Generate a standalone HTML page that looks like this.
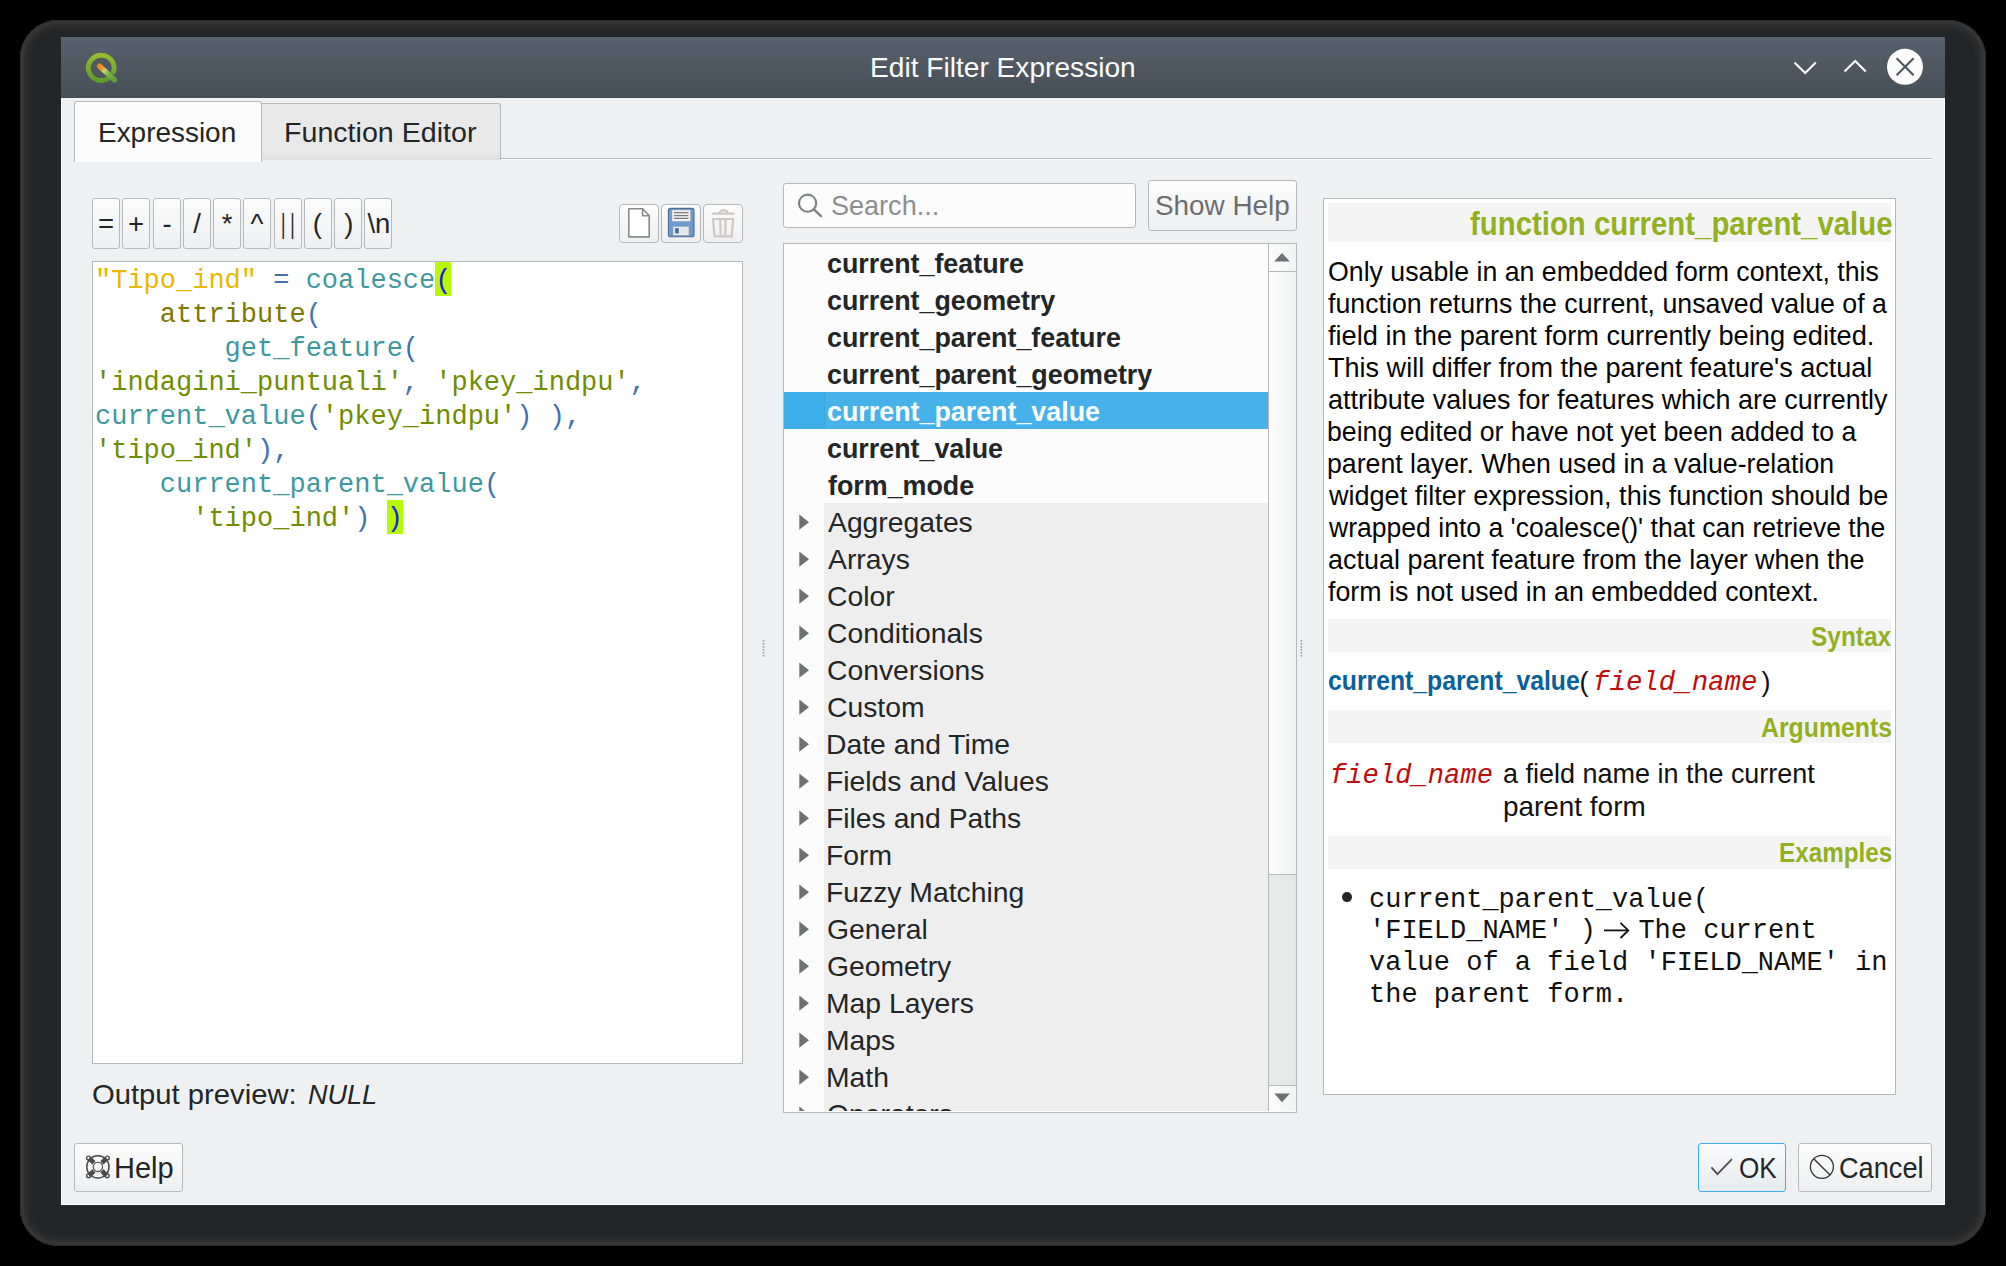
<!DOCTYPE html><html><head><meta charset="utf-8"><style>html,body{margin:0;padding:0}body{width:2006px;height:1266px;background:#000;position:relative;overflow:hidden}body>div,body>svg{position:absolute;box-sizing:content-box}.t{white-space:pre;line-height:0;height:0}</style></head><body>
<div style="left:20px;top:20px;width:1966px;height:1226px;border-radius:38px;background:#232629;box-shadow:inset 0 0 0 1px #2a2a2b, inset 0 0 0 2px #3a3939, inset 0 0 0 4px #353535, inset 0 0 0 6px #2f2f30, inset 0 0 0 8px #2a2b2c, inset 0 0 0 11px #26282a"></div>
<div style="left:61px;top:98px;width:1884px;height:1107px;background:#eff0f1;box-shadow:inset 1px 0 0 #fff, inset -1px 0 0 #fff, inset 0 -1px 0 #fff"></div>
<div style="left:61px;top:37px;width:1884px;height:61px;background:linear-gradient(#58626c,#464e56)"></div>
<svg style="left:80px;top:46px" width="44" height="42" viewBox="80 46 44 42">
<defs><linearGradient id="qg" x1="0" y1="0" x2="0" y2="1"><stop offset="0" stop-color="#94bb2c"/><stop offset="1" stop-color="#5d9c2d"/></linearGradient>
<linearGradient id="pg" gradientUnits="userSpaceOnUse" x1="98.5" y1="65" x2="115.5" y2="80.8"><stop offset="0" stop-color="#f07f1c"/><stop offset="0.22" stop-color="#f29a3a"/><stop offset="0.36" stop-color="#c9d66e"/><stop offset="0.55" stop-color="#7fb446"/><stop offset="1" stop-color="#5c9d36"/></linearGradient></defs>
<path d="M108.6 78.2 A12.9 12.6 0 1 1 112.7 73.6" fill="none" stroke="url(#qg)" stroke-width="4.9"/>
<line x1="99.6" y1="66.2" x2="114.6" y2="80" stroke="url(#pg)" stroke-width="5.4" stroke-linecap="round"/>
</svg>
<div class="t" style="left:869.55px;top:68.19px;font-family:'Liberation Sans', sans-serif;font-size:28px;font-weight:400;font-style:normal;color:#fcfcfc;transform:scaleX(1.0046);transform-origin:0 0;">Edit Filter Expression</div>
<svg style="left:1780px;top:40px" width="150" height="55" viewBox="1780 40 150 55">
<polyline points="1794.5,62.5 1805.2,73 1815.8,62.5" fill="none" stroke="#fcfcfc" stroke-width="2.1"/>
<polyline points="1844.5,71.5 1855.2,61 1865.8,71.5" fill="none" stroke="#fcfcfc" stroke-width="2.1"/>
<circle cx="1905" cy="66.8" r="18" fill="#fcfcfc"/>
<line x1="1896.6" y1="58.3" x2="1913.6" y2="75.3" stroke="#4b535b" stroke-width="2.1"/>
<line x1="1913.6" y1="58.3" x2="1896.6" y2="75.3" stroke="#4b535b" stroke-width="2.1"/>
</svg>
<div style="left:501px;top:158px;width:1431px;height:1px;background:#b6b8b9"></div>
<div style="left:501px;top:159px;width:1431px;height:1px;background:#fbfbfb"></div>
<div style="left:261px;top:103px;width:239px;height:56px;background:linear-gradient(#e9e9ea 0%,#e8e8e8 85%,#dfe0e0 100%);border:1px solid #b6b8b9;border-bottom:none;border-left:none;border-radius:0 3px 0 0"></div>
<div style="left:74px;top:101px;width:186px;height:60px;background:#fcfcfc;border:1px solid #b6b8b9;border-bottom:none;border-radius:3px 3px 0 0"></div>
<div class="t" style="left:98.36px;top:132.87px;font-family:'Liberation Sans', sans-serif;font-size:27.5px;font-weight:400;font-style:normal;color:#232627;transform:scaleX(1.0159);transform-origin:0 0;">Expression</div>
<div class="t" style="left:284.21px;top:132.87px;font-family:'Liberation Sans', sans-serif;font-size:27.5px;font-weight:400;font-style:normal;color:#232627;transform:scaleX(1.0404);transform-origin:0 0;">Function Editor</div>
<div style="left:92px;top:198px;width:26px;height:49px;background:linear-gradient(#fcfcfc,#eeeff0);border:1px solid #b6b8b9;border-radius:3px"></div>
<div class="t" style="left:97.96px;top:224.47px;font-family:'Liberation Sans', sans-serif;font-size:27.5px;font-weight:400;font-style:normal;color:#232627;">=</div>
<div style="left:122px;top:198px;width:26px;height:49px;background:linear-gradient(#fcfcfc,#eeeff0);border:1px solid #b6b8b9;border-radius:3px"></div>
<div class="t" style="left:127.96px;top:224.47px;font-family:'Liberation Sans', sans-serif;font-size:27.5px;font-weight:400;font-style:normal;color:#232627;">+</div>
<div style="left:153px;top:198px;width:26px;height:49px;background:linear-gradient(#fcfcfc,#eeeff0);border:1px solid #b6b8b9;border-radius:3px"></div>
<div class="t" style="left:162.39px;top:224.47px;font-family:'Liberation Sans', sans-serif;font-size:27.5px;font-weight:400;font-style:normal;color:#232627;">-</div>
<div style="left:183px;top:198px;width:26px;height:49px;background:linear-gradient(#fcfcfc,#eeeff0);border:1px solid #b6b8b9;border-radius:3px"></div>
<div class="t" style="left:193.15px;top:224.47px;font-family:'Liberation Sans', sans-serif;font-size:27.5px;font-weight:400;font-style:normal;color:#232627;">/</div>
<div style="left:213px;top:198px;width:26px;height:49px;background:linear-gradient(#fcfcfc,#eeeff0);border:1px solid #b6b8b9;border-radius:3px"></div>
<div class="t" style="left:221.64px;top:224.47px;font-family:'Liberation Sans', sans-serif;font-size:27.5px;font-weight:400;font-style:normal;color:#232627;">*</div>
<div style="left:243px;top:198px;width:26px;height:49px;background:linear-gradient(#fcfcfc,#eeeff0);border:1px solid #b6b8b9;border-radius:3px"></div>
<div class="t" style="left:250.54px;top:224.47px;font-family:'Liberation Sans', sans-serif;font-size:27.5px;font-weight:400;font-style:normal;color:#232627;">^</div>
<div style="left:274px;top:198px;width:26px;height:49px;background:linear-gradient(#fcfcfc,#eeeff0);border:1px solid #b6b8b9;border-radius:3px"></div>
<div class="t" style="left:281.18px;top:224.47px;font-family:'Liberation Sans', sans-serif;font-size:27.5px;font-weight:400;font-style:normal;color:#232627;transform:scaleX(0.6200);transform-origin:0 0;">| |</div>
<div style="left:304px;top:198px;width:26px;height:49px;background:linear-gradient(#fcfcfc,#eeeff0);border:1px solid #b6b8b9;border-radius:3px"></div>
<div class="t" style="left:312.71px;top:224.47px;font-family:'Liberation Sans', sans-serif;font-size:27.5px;font-weight:400;font-style:normal;color:#232627;">(</div>
<div style="left:334px;top:198px;width:26px;height:49px;background:linear-gradient(#fcfcfc,#eeeff0);border:1px solid #b6b8b9;border-radius:3px"></div>
<div class="t" style="left:344.22px;top:224.47px;font-family:'Liberation Sans', sans-serif;font-size:27.5px;font-weight:400;font-style:normal;color:#232627;">)</div>
<div style="left:364px;top:198px;width:26px;height:49px;background:linear-gradient(#fcfcfc,#eeeff0);border:1px solid #b6b8b9;border-radius:3px"></div>
<div class="t" style="left:367.41px;top:224.47px;font-family:'Liberation Sans', sans-serif;font-size:27.5px;font-weight:400;font-style:normal;color:#232627;">\n</div>
<div style="left:619px;top:204px;width:38px;height:37px;background:linear-gradient(#fcfcfc,#eeeff0);border:1px solid #b6b8b9;border-radius:4px"></div>
<div style="left:661px;top:204px;width:38px;height:37px;background:linear-gradient(#fcfcfc,#eeeff0);border:1px solid #b6b8b9;border-radius:4px"></div>
<div style="left:703px;top:204px;width:38px;height:37px;background:linear-gradient(#fcfcfc,#eeeff0);border:1px solid #b6b8b9;border-radius:4px"></div>
<svg style="left:620px;top:204px" width="125" height="40" viewBox="620 204 125 40">
<path d="M628.8 208.8 H642.6 L649.2 215.8 V236.9 H628.8 Z" fill="#ffffff" stroke="#8a8a8a" stroke-width="1.6" stroke-linejoin="round"/>
<path d="M642.6 208.8 V215.8 H649.2" fill="none" stroke="#8a8a8a" stroke-width="1.6" stroke-linejoin="round"/>
<rect x="668.4" y="208.4" width="25.6" height="28.3" rx="2.3" fill="#6b9bd0" stroke="#4a6d97" stroke-width="1.1"/>
<rect x="672" y="210" width="18.4" height="11.3" fill="#f0f0f0" stroke="#a8a8a8" stroke-width="0.5"/>
<line x1="674" y1="212.7" x2="688.4" y2="212.7" stroke="#7a7a7a" stroke-width="1.2"/>
<line x1="674" y1="215.6" x2="688.4" y2="215.6" stroke="#7a7a7a" stroke-width="1.2"/>
<line x1="674" y1="218.4" x2="688.4" y2="218.4" stroke="#7a7a7a" stroke-width="1.2"/>
<rect x="673" y="226.5" width="16" height="8.8" fill="#e9e9e9" stroke="#a0a0a0" stroke-width="0.6"/>
<rect x="675.2" y="228.2" width="3.5" height="5.2" fill="#3d6591"/>
<g fill="none" stroke="#d3c6c6" stroke-width="2.2" stroke-linecap="round">
<line x1="712.6" y1="213.6" x2="733.6" y2="213.6"/>
<path d="M719.6 212 Q723.5 208.3 727.6 212"/>
<path d="M713 219 L733.2 219 L731.6 236.4 L714.6 236.4 Z" stroke-linejoin="round"/>
<line x1="720.3" y1="219.5" x2="720.6" y2="235.5"/>
<line x1="725.6" y1="219.5" x2="725.3" y2="235.5"/>
</g>
</svg>
<div style="left:92px;top:261px;width:649px;height:801px;background:#ffffff;border:1px solid #b6b8b9"></div>
<div style="left:435.20px;top:262px;width:16.20px;height:34px;background:#b7f907"></div>
<div style="left:386.60px;top:500px;width:16.20px;height:34px;background:#b7f907"></div>
<div class="t" style="left:95px;top:280.52px;font-family:'Liberation Mono', monospace;font-size:27px"><span style="color:#eab700">&quot;Tipo_ind&quot;</span><span style="color:#4271ae"> </span><span style="color:#4271ae">=</span><span style="color:#4271ae"> </span><span style="color:#3e999f">coalesce</span><span style="color:#1c1ce8">(</span></div>
<div class="t" style="left:95px;top:314.52px;font-family:'Liberation Mono', monospace;font-size:27px"><span style="color:#7f7800">    attribute</span><span style="color:#4271ae">(</span></div>
<div class="t" style="left:95px;top:348.52px;font-family:'Liberation Mono', monospace;font-size:27px"><span style="color:#3e999f">        get_feature</span><span style="color:#4271ae">(</span></div>
<div class="t" style="left:95px;top:382.52px;font-family:'Liberation Mono', monospace;font-size:27px"><span style="color:#718c00">&#x27;indagini_puntuali&#x27;</span><span style="color:#4271ae">,</span><span style="color:#4271ae"> </span><span style="color:#718c00">&#x27;pkey_indpu&#x27;</span><span style="color:#4271ae">,</span></div>
<div class="t" style="left:95px;top:416.52px;font-family:'Liberation Mono', monospace;font-size:27px"><span style="color:#3e999f">current_value</span><span style="color:#4271ae">(</span><span style="color:#718c00">&#x27;pkey_indpu&#x27;</span><span style="color:#4271ae">)</span><span style="color:#4271ae"> </span><span style="color:#4271ae">)</span><span style="color:#4271ae">,</span></div>
<div class="t" style="left:95px;top:450.52px;font-family:'Liberation Mono', monospace;font-size:27px"><span style="color:#718c00">&#x27;tipo_ind&#x27;</span><span style="color:#4271ae">)</span><span style="color:#4271ae">,</span></div>
<div class="t" style="left:95px;top:484.52px;font-family:'Liberation Mono', monospace;font-size:27px"><span style="color:#3e999f">    current_parent_value</span><span style="color:#4271ae">(</span></div>
<div class="t" style="left:95px;top:518.52px;font-family:'Liberation Mono', monospace;font-size:27px"><span style="color:#718c00">      &#x27;tipo_ind&#x27;</span><span style="color:#4271ae">)</span><span style="color:#4271ae"> </span><span style="color:#1c1ce8">)</span></div>
<div class="t" style="left:91.69px;top:1095.29px;font-family:'Liberation Sans', sans-serif;font-size:28px;font-weight:400;font-style:normal;color:#232627;transform:scaleX(1.0436);transform-origin:0 0;">Output preview:</div>
<div class="t" style="left:307.59px;top:1095.47px;font-family:'Liberation Sans', sans-serif;font-size:27.5px;font-weight:400;font-style:italic;color:#232627;transform:scaleX(0.9835);transform-origin:0 0;">NULL</div>
<div style="left:783px;top:183px;width:351px;height:43px;background:#fcfcfc;border:1px solid #b6b8b9;border-radius:3px"></div>
<svg style="left:790px;top:186px" width="40" height="36" viewBox="790 186 40 36">
<circle cx="807.6" cy="203.2" r="8.6" fill="none" stroke="#7f8283" stroke-width="2.1"/>
<line x1="813.8" y1="209.4" x2="821" y2="216.2" stroke="#7f8283" stroke-width="2.4" stroke-linecap="round"/>
</svg>
<div class="t" style="left:831.18px;top:206.27px;font-family:'Liberation Sans', sans-serif;font-size:27.5px;font-weight:400;font-style:normal;color:#8c8e90;transform:scaleX(0.9832);transform-origin:0 0;">Search...</div>
<div style="left:1148px;top:180px;width:147px;height:49px;background:linear-gradient(#fcfcfc,#eeeff0);border:1px solid #b6b8b9;border-radius:3px"></div>
<div class="t" style="left:1154.75px;top:206.09px;font-family:'Liberation Sans', sans-serif;font-size:28px;font-weight:400;font-style:normal;color:#6b6e70;transform:scaleX(0.9947);transform-origin:0 0;">Show Help</div>
<div style="left:783px;top:243px;width:512px;height:868px;background:#fcfcfc;border:1px solid #b6b8b9"></div>
<div style="left:824px;top:503px;width:444px;height:608px;background:#eeeeee"></div>
<div style="left:784px;top:392px;width:484px;height:37px;background:#3daee9"></div>
<div style="left:824px;top:392px;width:444px;height:37px;background:#47b2ea;box-shadow:inset 1px 0 0 #3aa6de"></div>
<div class="t" style="left:826.93px;top:263.87px;font-family:'Liberation Sans', sans-serif;font-size:27.5px;font-weight:700;font-style:normal;color:#232627;transform:scaleX(0.9761);transform-origin:0 0;">current_feature</div>
<div class="t" style="left:826.93px;top:300.87px;font-family:'Liberation Sans', sans-serif;font-size:27.5px;font-weight:700;font-style:normal;color:#232627;transform:scaleX(0.9761);transform-origin:0 0;">current_geometry</div>
<div class="t" style="left:826.93px;top:337.87px;font-family:'Liberation Sans', sans-serif;font-size:27.5px;font-weight:700;font-style:normal;color:#232627;transform:scaleX(0.9761);transform-origin:0 0;">current_parent_feature</div>
<div class="t" style="left:826.93px;top:374.87px;font-family:'Liberation Sans', sans-serif;font-size:27.5px;font-weight:700;font-style:normal;color:#232627;transform:scaleX(0.9761);transform-origin:0 0;">current_parent_geometry</div>
<div class="t" style="left:826.93px;top:411.87px;font-family:'Liberation Sans', sans-serif;font-size:27.5px;font-weight:700;font-style:normal;color:#fcfcfc;transform:scaleX(0.9761);transform-origin:0 0;">current_parent_value</div>
<div class="t" style="left:826.93px;top:448.87px;font-family:'Liberation Sans', sans-serif;font-size:27.5px;font-weight:700;font-style:normal;color:#232627;transform:scaleX(0.9761);transform-origin:0 0;">current_value</div>
<div class="t" style="left:827.60px;top:485.87px;font-family:'Liberation Sans', sans-serif;font-size:27.5px;font-weight:700;font-style:normal;color:#232627;transform:scaleX(0.9761);transform-origin:0 0;">form_mode</div>
<div class="t" style="left:828.00px;top:522.87px;font-family:'Liberation Sans', sans-serif;font-size:27.5px;font-weight:400;font-style:normal;color:#232627;transform:scaleX(1.0293);transform-origin:0 0;">Aggregates</div>
<div class="t" style="left:828.00px;top:559.87px;font-family:'Liberation Sans', sans-serif;font-size:27.5px;font-weight:400;font-style:normal;color:#232627;transform:scaleX(1.0293);transform-origin:0 0;">Arrays</div>
<div class="t" style="left:826.58px;top:596.87px;font-family:'Liberation Sans', sans-serif;font-size:27.5px;font-weight:400;font-style:normal;color:#232627;transform:scaleX(1.0293);transform-origin:0 0;">Color</div>
<div class="t" style="left:826.58px;top:633.87px;font-family:'Liberation Sans', sans-serif;font-size:27.5px;font-weight:400;font-style:normal;color:#232627;transform:scaleX(1.0293);transform-origin:0 0;">Conditionals</div>
<div class="t" style="left:826.58px;top:670.87px;font-family:'Liberation Sans', sans-serif;font-size:27.5px;font-weight:400;font-style:normal;color:#232627;transform:scaleX(1.0293);transform-origin:0 0;">Conversions</div>
<div class="t" style="left:826.58px;top:707.87px;font-family:'Liberation Sans', sans-serif;font-size:27.5px;font-weight:400;font-style:normal;color:#232627;transform:scaleX(1.0293);transform-origin:0 0;">Custom</div>
<div class="t" style="left:825.74px;top:744.87px;font-family:'Liberation Sans', sans-serif;font-size:27.5px;font-weight:400;font-style:normal;color:#232627;transform:scaleX(1.0293);transform-origin:0 0;">Date and Time</div>
<div class="t" style="left:825.74px;top:781.87px;font-family:'Liberation Sans', sans-serif;font-size:27.5px;font-weight:400;font-style:normal;color:#232627;transform:scaleX(1.0293);transform-origin:0 0;">Fields and Values</div>
<div class="t" style="left:825.74px;top:818.87px;font-family:'Liberation Sans', sans-serif;font-size:27.5px;font-weight:400;font-style:normal;color:#232627;transform:scaleX(1.0293);transform-origin:0 0;">Files and Paths</div>
<div class="t" style="left:825.74px;top:855.87px;font-family:'Liberation Sans', sans-serif;font-size:27.5px;font-weight:400;font-style:normal;color:#232627;transform:scaleX(1.0293);transform-origin:0 0;">Form</div>
<div class="t" style="left:825.74px;top:892.87px;font-family:'Liberation Sans', sans-serif;font-size:27.5px;font-weight:400;font-style:normal;color:#232627;transform:scaleX(1.0293);transform-origin:0 0;">Fuzzy Matching</div>
<div class="t" style="left:826.58px;top:929.87px;font-family:'Liberation Sans', sans-serif;font-size:27.5px;font-weight:400;font-style:normal;color:#232627;transform:scaleX(1.0293);transform-origin:0 0;">General</div>
<div class="t" style="left:826.58px;top:966.87px;font-family:'Liberation Sans', sans-serif;font-size:27.5px;font-weight:400;font-style:normal;color:#232627;transform:scaleX(1.0293);transform-origin:0 0;">Geometry</div>
<div class="t" style="left:825.74px;top:1003.87px;font-family:'Liberation Sans', sans-serif;font-size:27.5px;font-weight:400;font-style:normal;color:#232627;transform:scaleX(1.0293);transform-origin:0 0;">Map Layers</div>
<div class="t" style="left:825.74px;top:1040.87px;font-family:'Liberation Sans', sans-serif;font-size:27.5px;font-weight:400;font-style:normal;color:#232627;transform:scaleX(1.0293);transform-origin:0 0;">Maps</div>
<div class="t" style="left:825.74px;top:1077.87px;font-family:'Liberation Sans', sans-serif;font-size:27.5px;font-weight:400;font-style:normal;color:#232627;transform:scaleX(1.0293);transform-origin:0 0;">Math</div>
<svg style="left:784px;top:244px" width="40" height="867" viewBox="784 244 40 867"><g fill="#6f7070"><path d="M799.3 514.6 L809 522.2 L799.3 529.8 Z"/><path d="M799.3 551.6 L809 559.2 L799.3 566.8 Z"/><path d="M799.3 588.6 L809 596.2 L799.3 603.8 Z"/><path d="M799.3 625.6 L809 633.2 L799.3 640.8 Z"/><path d="M799.3 662.6 L809 670.2 L799.3 677.8 Z"/><path d="M799.3 699.6 L809 707.2 L799.3 714.8 Z"/><path d="M799.3 736.6 L809 744.2 L799.3 751.8 Z"/><path d="M799.3 773.6 L809 781.2 L799.3 788.8 Z"/><path d="M799.3 810.6 L809 818.2 L799.3 825.8 Z"/><path d="M799.3 847.6 L809 855.2 L799.3 862.8 Z"/><path d="M799.3 884.6 L809 892.2 L799.3 899.8 Z"/><path d="M799.3 921.6 L809 929.2 L799.3 936.8 Z"/><path d="M799.3 958.6 L809 966.2 L799.3 973.8 Z"/><path d="M799.3 995.6 L809 1003.2 L799.3 1010.8 Z"/><path d="M799.3 1032.6 L809 1040.2 L799.3 1047.8 Z"/><path d="M799.3 1069.6 L809 1077.2 L799.3 1084.8 Z"/><path d="M799.3 1106.6 L809 1114.2 L799.3 1121.8 Z"/></g></svg>
<div style="left:824px;top:1095px;width:444px;height:16px;overflow:hidden"><div class="t" style="position:absolute;left:2.62px;top:19.87px;font-family:'Liberation Sans', sans-serif;font-size:27.5px;color:#232627;transform:scaleX(1.0293);transform-origin:0 0">Operators</div></div>
<div style="left:1268px;top:244px;width:27px;height:867px;background:linear-gradient(to right,#fcfcfc,#f1f2f2);border-left:1px solid #b6b8b9"></div>
<div style="left:1269px;top:271px;width:27px;height:1px;background:#b6b8b9"></div>
<div style="left:1269px;top:874px;width:27px;height:210px;background:linear-gradient(to right,#e7e8e8 85%,#e1e2e2);border-top:1px solid #b6b8b9;border-bottom:1px solid #b6b8b9"></div>
<svg style="left:1268px;top:244px" width="28" height="867" viewBox="1268 244 28 867">
<path d="M1274.3 261.6 L1282 253 L1289.8 261.6 Z" fill="#6e7072"/>
<path d="M1274.3 1093.5 L1289.8 1093.5 L1282 1102.3 Z" fill="#6e7072"/>
</svg>
<svg style="left:750px;top:630px" width="600" height="40" viewBox="750 630 600 40"><g fill="#9a9b9c"><rect x="762.7" y="640" width="1.6" height="1.6"/><rect x="762.7" y="643" width="1.6" height="1.6"/><rect x="762.7" y="646" width="1.6" height="1.6"/><rect x="762.7" y="649" width="1.6" height="1.6"/><rect x="762.7" y="652" width="1.6" height="1.6"/><rect x="762.7" y="655" width="1.6" height="1.6"/><rect x="1300.6" y="640" width="1.6" height="1.6"/><rect x="1300.6" y="643" width="1.6" height="1.6"/><rect x="1300.6" y="646" width="1.6" height="1.6"/><rect x="1300.6" y="649" width="1.6" height="1.6"/><rect x="1300.6" y="652" width="1.6" height="1.6"/><rect x="1300.6" y="655" width="1.6" height="1.6"/></g></svg>
<div style="left:1323px;top:198px;width:571px;height:895px;background:#ffffff;border:1px solid #b6b8b9"></div>
<div style="left:1328px;top:203px;width:563px;height:39px;background:#f4f4f5"></div>
<div style="left:1328px;top:619px;width:563px;height:33px;background:#f4f4f5"></div>
<div style="left:1328px;top:710px;width:563px;height:33px;background:#f4f4f5"></div>
<div style="left:1328px;top:836px;width:563px;height:33px;background:#f4f4f5"></div>
<div class="t" style="left:1469.56px;top:223.86px;font-family:'Liberation Sans', sans-serif;font-size:33px;font-weight:700;font-style:normal;color:#93b023;transform:scaleX(0.8896);transform-origin:0 0;">function current_parent_value</div>
<div class="t" style="left:1327.50px;top:272.14px;font-family:'Liberation Sans', sans-serif;font-size:27.3px;font-weight:400;font-style:normal;color:#050505;transform:scaleX(0.9785);transform-origin:0 0;">Only usable in an embedded form context, this</div>
<div class="t" style="left:1328.30px;top:304.14px;font-family:'Liberation Sans', sans-serif;font-size:27.3px;font-weight:400;font-style:normal;color:#050505;transform:scaleX(0.9797);transform-origin:0 0;">function returns the current, unsaved value of a</div>
<div class="t" style="left:1328.29px;top:336.14px;font-family:'Liberation Sans', sans-serif;font-size:27.3px;font-weight:400;font-style:normal;color:#050505;transform:scaleX(0.9974);transform-origin:0 0;">field in the parent form currently being edited.</div>
<div class="t" style="left:1328.16px;top:368.14px;font-family:'Liberation Sans', sans-serif;font-size:27.3px;font-weight:400;font-style:normal;color:#050505;transform:scaleX(0.9909);transform-origin:0 0;">This will differ from the parent feature&#x27;s actual</div>
<div class="t" style="left:1327.62px;top:400.14px;font-family:'Liberation Sans', sans-serif;font-size:27.3px;font-weight:400;font-style:normal;color:#050505;transform:scaleX(0.9861);transform-origin:0 0;">attribute values for features which are currently</div>
<div class="t" style="left:1326.97px;top:432.14px;font-family:'Liberation Sans', sans-serif;font-size:27.3px;font-weight:400;font-style:normal;color:#050505;transform:scaleX(0.9768);transform-origin:0 0;">being edited or have not yet been added to a</div>
<div class="t" style="left:1326.97px;top:464.14px;font-family:'Liberation Sans', sans-serif;font-size:27.3px;font-weight:400;font-style:normal;color:#050505;transform:scaleX(0.9771);transform-origin:0 0;">parent layer. When used in a value-relation</div>
<div class="t" style="left:1328.70px;top:496.14px;font-family:'Liberation Sans', sans-serif;font-size:27.3px;font-weight:400;font-style:normal;color:#050505;transform:scaleX(0.9908);transform-origin:0 0;">widget filter expression, this function should be</div>
<div class="t" style="left:1328.70px;top:528.14px;font-family:'Liberation Sans', sans-serif;font-size:27.3px;font-weight:400;font-style:normal;color:#050505;transform:scaleX(0.9727);transform-origin:0 0;">wrapped into a &#x27;coalesce()&#x27; that can retrieve the</div>
<div class="t" style="left:1327.62px;top:560.14px;font-family:'Liberation Sans', sans-serif;font-size:27.3px;font-weight:400;font-style:normal;color:#050505;transform:scaleX(0.9877);transform-origin:0 0;">actual parent feature from the layer when the</div>
<div class="t" style="left:1328.30px;top:592.14px;font-family:'Liberation Sans', sans-serif;font-size:27.3px;font-weight:400;font-style:normal;color:#050505;transform:scaleX(0.9803);transform-origin:0 0;">form is not used in an embedded context.</div>
<div class="t" style="left:1810.97px;top:636.12px;font-family:'Liberation Sans', sans-serif;font-size:28.5px;font-weight:700;font-style:normal;color:#93b023;transform:scaleX(0.8575);transform-origin:0 0;">Syntax</div>
<div class="t" style="left:1327.51px;top:681.37px;font-family:'Liberation Sans', sans-serif;font-size:27.5px;font-weight:700;font-style:normal;color:#0a6099;transform:scaleX(0.8998);transform-origin:0 0;">current_parent_value</div>
<div class="t" style="left:1579.38px;top:681.54px;font-family:'Liberation Sans', sans-serif;font-size:27px;font-weight:400;font-style:normal;color:#111111;">(</div>
<div class="t" style="left:1592.82px;top:683.32px;font-family:'Liberation Mono', monospace;font-size:27px;font-weight:400;font-style:italic;color:#bf0c0c;transform:scaleX(1.0147);transform-origin:0 0;">field_name</div>
<div class="t" style="left:1761.57px;top:681.54px;font-family:'Liberation Sans', sans-serif;font-size:27px;font-weight:400;font-style:normal;color:#111111;">)</div>
<div class="t" style="left:1761.08px;top:726.72px;font-family:'Liberation Sans', sans-serif;font-size:28.5px;font-weight:700;font-style:normal;color:#93b023;transform:scaleX(0.8708);transform-origin:0 0;">Arguments</div>
<div class="t" style="left:1329.55px;top:775.82px;font-family:'Liberation Mono', monospace;font-size:27px;font-weight:400;font-style:italic;color:#bf0c0c;transform:scaleX(1.0058);transform-origin:0 0;">field_name</div>
<div class="t" style="left:1503.32px;top:774.34px;font-family:'Liberation Sans', sans-serif;font-size:27.3px;font-weight:400;font-style:normal;color:#111111;transform:scaleX(0.9880);transform-origin:0 0;">a field name in the current</div>
<div class="t" style="left:1502.59px;top:806.54px;font-family:'Liberation Sans', sans-serif;font-size:27.3px;font-weight:400;font-style:normal;color:#111111;transform:scaleX(1.0221);transform-origin:0 0;">parent form</div>
<div class="t" style="left:1778.62px;top:852.32px;font-family:'Liberation Sans', sans-serif;font-size:28.5px;font-weight:700;font-style:normal;color:#93b023;transform:scaleX(0.8516);transform-origin:0 0;">Examples</div>
<svg style="left:1340px;top:890px" width="14" height="14" viewBox="1340 890 14 14"><circle cx="1347" cy="897.1" r="5" fill="#232627"/></svg>
<div class="t" style="left:1369px;top:899.52px;font-family:'Liberation Mono', monospace;font-size:27px;color:#111111">current_parent_value(</div>
<div class="t" style="left:1369px;top:931.42px;font-family:'Liberation Mono', monospace;font-size:27px;color:#111111">&#x27;FIELD_NAME&#x27; )</div>
<div class="t" style="left:1369px;top:963.12px;font-family:'Liberation Mono', monospace;font-size:27px;color:#111111">value of a field &#x27;FIELD_NAME&#x27; in</div>
<div class="t" style="left:1369px;top:994.62px;font-family:'Liberation Mono', monospace;font-size:27px;color:#111111">the parent form.</div>
<svg style="left:1600px;top:918px" width="34" height="24" viewBox="1600 918 34 24">
<line x1="1604" y1="930.4" x2="1628" y2="930.4" stroke="#111" stroke-width="1.8"/>
<polyline points="1620.5,922.8 1628.3,930.4 1620.5,938" fill="none" stroke="#111" stroke-width="1.8"/>
</svg>
<div class="t" style="left:1638.4px;top:931.42px;font-family:'Liberation Mono', monospace;font-size:27px;color:#111111">The current</div>
<div style="left:74px;top:1143px;width:107px;height:47px;background:linear-gradient(#fcfcfc,#eeeff0);border:1px solid #b6b8b9;border-radius:3px"></div>
<svg style="left:84px;top:1152px" width="30" height="30" viewBox="84 1152 30 30">
<ellipse cx="97.9" cy="1166.9" rx="11.1" ry="11.1" fill="none" stroke="#4a4a4a" stroke-width="1.5"/>
<line x1="101.90" y1="1170.90" x2="106.50" y2="1175.50" stroke="#4a4a4a" stroke-width="4.6"/>
<circle cx="107.30" cy="1175.80" r="1.9" fill="none" stroke="#4a4a4a" stroke-width="1.4"/>
<line x1="101.90" y1="1162.90" x2="106.50" y2="1158.30" stroke="#4a4a4a" stroke-width="4.6"/>
<circle cx="107.30" cy="1158.00" r="1.9" fill="none" stroke="#4a4a4a" stroke-width="1.4"/>
<line x1="93.90" y1="1170.90" x2="89.30" y2="1175.50" stroke="#4a4a4a" stroke-width="4.6"/>
<circle cx="88.50" cy="1175.80" r="1.9" fill="none" stroke="#4a4a4a" stroke-width="1.4"/>
<line x1="93.90" y1="1162.90" x2="89.30" y2="1158.30" stroke="#4a4a4a" stroke-width="4.6"/>
<circle cx="88.50" cy="1158.00" r="1.9" fill="none" stroke="#4a4a4a" stroke-width="1.4"/>
<circle cx="97.9" cy="1166.9" r="4.7" fill="#f5f5f5" stroke="#4a4a4a" stroke-width="1.1"/>
</svg>
<div class="t" style="left:114.28px;top:1168.38px;font-family:'Liberation Sans', sans-serif;font-size:28.6px;font-weight:400;font-style:normal;color:#232627;transform:scaleX(1.0137);transform-origin:0 0;">Help</div>
<div style="left:1698px;top:1143px;width:86px;height:47px;background:linear-gradient(#fbfcfc,#e4eaee);border:1px solid #3daee9;border-radius:3px"></div>
<svg style="left:1706px;top:1152px" width="32" height="30" viewBox="1706 1152 32 30">
<polyline points="1711.4,1167.4 1717.4,1174.2 1732,1159.2" fill="none" stroke="#4d4d4d" stroke-width="1.8"/>
</svg>
<div class="t" style="left:1739.12px;top:1168.38px;font-family:'Liberation Sans', sans-serif;font-size:28.6px;font-weight:400;font-style:normal;color:#232627;transform:scaleX(0.9131);transform-origin:0 0;">OK</div>
<div style="left:1798px;top:1143px;width:132px;height:47px;background:linear-gradient(#fcfcfc,#eeeff0);border:1px solid #b6b8b9;border-radius:3px"></div>
<svg style="left:1806px;top:1150px" width="32" height="34" viewBox="1806 1150 32 34">
<circle cx="1821.9" cy="1166.8" r="11.5" fill="none" stroke="#333" stroke-width="1.3"/>
<line x1="1814" y1="1158.9" x2="1829.8" y2="1174.7" stroke="#333" stroke-width="1.4"/>
</svg>
<div class="t" style="left:1838.84px;top:1168.38px;font-family:'Liberation Sans', sans-serif;font-size:28.6px;font-weight:400;font-style:normal;color:#232627;transform:scaleX(0.9503);transform-origin:0 0;">Cancel</div>
</body></html>
